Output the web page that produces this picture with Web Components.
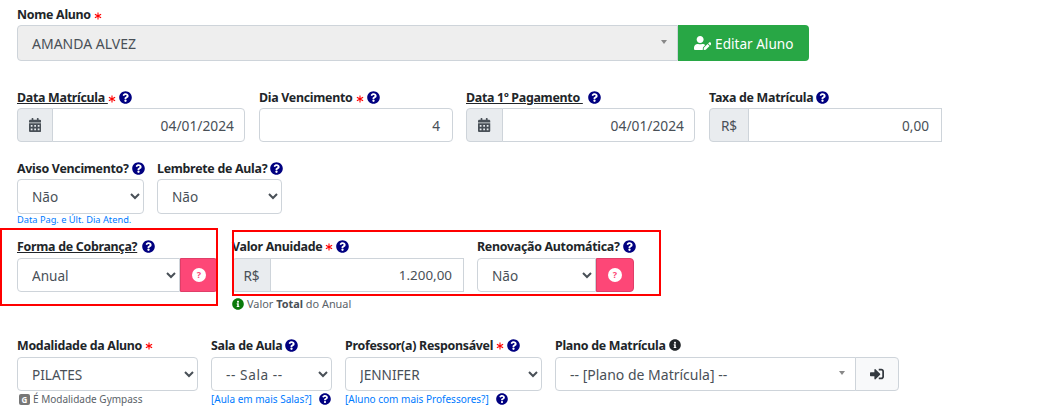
<!DOCTYPE html>
<html lang="pt-BR">
<head>
<meta charset="utf-8">
<title>Cadastro de Matrícula</title>
<style>
	body {
		margin: 0;
		background: #fff;
		font-family: "Noto Sans", "Open Sans", sans-serif;
		color: #212529;
		width: 1052px;
		height: 413px;
		overflow: hidden;
	}
</style>
</head>
<body>

<matricula-form></matricula-form>

<script>
// icon paths (solid set)
const ICONS = {
	question: ['0 0 512 512', 'M504 256c0 136.997-111.043 248-248 248S8 392.997 8 256C8 119.083 119.043 8 256 8s248 111.083 248 248zM262.655 90c-54.497 0-89.255 22.957-116.549 63.758-3.536 5.286-2.353 12.415 2.715 16.258l34.699 26.31c5.205 3.947 12.621 3.008 16.665-2.122 17.864-22.658 30.113-35.797 57.303-35.797 20.429 0 45.698 13.148 45.698 32.958 0 14.976-12.363 22.667-32.534 33.976C247.128 238.528 216 254.941 216 296v4c0 6.627 5.373 12 12 12h56c6.627 0 12-5.373 12-12v-1.333c0-28.462 83.186-29.647 83.186-106.667 0-58.002-60.165-102-116.531-102zM256 338c-25.365 0-46 20.635-46 46 0 25.364 20.635 46 46 46s46-20.636 46-46c0-25.365-20.635-46-46-46z'],
	info: ['0 0 512 512', 'M256 8C119.043 8 8 119.083 8 256c0 136.997 111.043 248 248 248s248-111.003 248-248C504 119.083 392.957 8 256 8zm0 110c23.196 0 42 18.804 42 42s-18.804 42-42 42-42-18.804-42-42 18.804-42 42-42zm56 254c0 6.627-5.373 12-12 12h-88c-6.627 0-12-5.373-12-12v-24c0-6.627 5.373-12 12-12h12v-64h-12c-6.627 0-12-5.373-12-12v-24c0-6.627 5.373-12 12-12h64c6.627 0 12 5.373 12 12v100h12c6.627 0 12 5.373 12 12v24z'],
	calendar: ['0 0 448 512', 'M0 464c0 26.5 21.5 48 48 48h352c26.5 0 48-21.5 48-48V192H0v272zm320-196c0-6.6 5.4-12 12-12h40c6.6 0 12 5.4 12 12v40c0 6.6-5.4 12-12 12h-40c-6.6 0-12-5.4-12-12v-40zm0 128c0-6.6 5.4-12 12-12h40c6.6 0 12 5.4 12 12v40c0 6.6-5.4 12-12 12h-40c-6.6 0-12-5.4-12-12v-40zM192 268c0-6.6 5.4-12 12-12h40c6.6 0 12 5.4 12 12v40c0 6.6-5.4 12-12 12h-40c-6.6 0-12-5.4-12-12v-40zm0 128c0-6.6 5.4-12 12-12h40c6.6 0 12 5.4 12 12v40c0 6.6-5.4 12-12 12h-40c-6.6 0-12-5.4-12-12v-40zM64 268c0-6.6 5.4-12 12-12h40c6.6 0 12 5.4 12 12v40c0 6.6-5.4 12-12 12H76c-6.6 0-12-5.4-12-12v-40zm0 128c0-6.6 5.4-12 12-12h40c6.6 0 12 5.4 12 12v40c0 6.6-5.4 12-12 12H76c-6.6 0-12-5.4-12-12v-40zM400 64h-48V16c0-8.8-7.2-16-16-16h-32c-8.8 0-16 7.2-16 16v48H160V16c0-8.8-7.2-16-16-16h-32c-8.8 0-16 7.2-16 16v48H48C21.5 64 0 85.5 0 112v48h448v-48c0-26.5-21.5-48-48-48z'],
	useredit: ['0 0 640 512', 'M224 256c70.7 0 128-57.3 128-128S294.7 0 224 0 96 57.3 96 128s57.3 128 128 128zm89.6 32h-16.7c-22.2 10.2-46.9 16-72.9 16s-50.6-5.8-72.9-16h-16.7C60.2 288 0 348.2 0 422.4V464c0 26.5 21.5 48 48 48h274.9c-2.4-6.8-3.4-14-2.6-21.3l6.8-60.9 1.2-11.1 7.9-7.9 77.3-77.3c-24.5-27.7-60-45.5-99.9-45.5zm45.3 145.3l-6.8 61c-1.1 10.2 7.5 18.8 17.6 17.6l60.9-6.8 137.9-137.9-71.7-71.7-137.9 137.8zM633 268.9L595.1 231c-9.3-9.3-24.5-9.3-33.8 0l-37.8 37.8-4.1 4.1 71.8 71.7 41.8-41.8c9.3-9.4 9.3-24.5 0-33.9z'],
	signin: ['0 0 512 512', 'M416 448h-84c-6.6 0-12-5.4-12-12v-40c0-6.6 5.4-12 12-12h84c17.7 0 32-14.3 32-32V160c0-17.7-14.3-32-32-32h-84c-6.6 0-12-5.4-12-12V76c0-6.6 5.4-12 12-12h84c53 0 96 43 96 96v192c0 53-43 96-96 96zm-47-201L201 79c-15-15-41-4.5-41 17v96H24c-13.3 0-24 10.7-24 24v96c0 13.3 10.7 24 24 24h136v96c0 21.5 26 32 41 17l168-168c9.3-9.4 9.3-24.6 0-34z'],
};

// A1. fa-style icon
class FaIcon extends HTMLElement {
	connectedCallback() {
		const [box, d] = ICONS[this.getAttribute('name')];
		const size = this.getAttribute('size') || 13;
		const color = this.getAttribute('color') || '#000080';
		const root = this.shadowRoot || this.attachShadow({ mode: 'open' });
		root.innerHTML = `
			<style>
				:host { display: inline-flex; align-items: center; flex: none; }
				svg { display: block; height: ${size}px; fill: ${color}; }
			</style>
			<svg viewBox="${box}" aria-hidden="true"><path d="${d}"/></svg>
		`;
	}
}
customElements.define('fa-icon', FaIcon);

// A2. Field label: required star, help icon, optional underline
class FieldLabel extends HTMLElement {
	connectedCallback() {
		const icon = this.getAttribute('icon');
		const iconColor = icon === 'info' ? '#212529' : '#000080';
		const iconSize = icon === 'info' ? 12 : 13;
		const root = this.shadowRoot || this.attachShadow({ mode: 'open' });
		root.innerHTML = `
			<style>
				:host {
					display: flex;
					align-items: center;
					box-sizing: border-box;
					height: 21px;
					padding-bottom: var(--label-pb, 0);
					font-size: 12.4px;
					font-weight: 700;
					letter-spacing: -0.28px;
					color: #212529;
					white-space: nowrap;
				}
				.under { text-decoration: underline; }
				.star { display: block; flex: none; width: 8px; height: 8px; margin-left: 3px; position: relative; top: 1px; stroke: #f00; stroke-width: 1.1; }
				.under + .star { margin-left: 0; }
				fa-icon { margin-left: 3px; }
				.under + fa-icon { margin-left: 5px; }
			</style>
			<span class="${this.hasAttribute('underline') ? 'under' : ''}"><slot></slot></span>
			${this.hasAttribute('required') ? '<svg class="star" viewBox="0 0 8 8" aria-hidden="true"><path d="M4 .4v7.2M.9 2.2l6.2 3.6M7.1 2.2L.9 5.8"/></svg>' : ''}
			${icon ? `<fa-icon name="${icon}" size="${iconSize}" color="${iconColor}"></fa-icon>` : ''}
		`;
	}
}
customElements.define('field-label', FieldLabel);

// A3. Box that looks like a form-control, value passed in the slot
class InputBox extends HTMLElement {
	constructor() {
		super();
		this.attachShadow({ mode: 'open' }).innerHTML = `
			<style>
				:host {
					display: flex;
					align-items: center;
					justify-content: flex-end;
					flex: 1;
					min-width: 0;
					height: 100%;
					box-sizing: border-box;
					padding: 0 var(--pr, 12px) 0 0;
					border: 1px solid #ced4da;
					border-radius: 4px;
					background: #fff;
					font-size: var(--fs, 13.6px);
					color: #495057;
				}
				:host([joined]) { border-radius: 0 4px 4px 0; margin-left: -1px; }
				:host([square]) { border-radius: 0; margin-left: -1px; }
			</style>
			<slot></slot>
		`;
	}
}
customElements.define('input-box', InputBox);

// A4. input-group addon (R$, calendar, etc)
class GroupAddon extends HTMLElement {
	constructor() {
		super();
		this.attachShadow({ mode: 'open' }).innerHTML = `
			<style>
				:host {
					display: flex;
					align-items: center;
					justify-content: center;
					flex: none;
					width: 36px;
					height: 100%;
					box-sizing: border-box;
					border: 1px solid #ced4da;
					border-radius: 4px 0 0 4px;
					background: #e9ecef;
					font-size: 13.6px;
					color: #495057;
				}
			</style>
			<slot></slot>
		`;
	}
}
customElements.define('group-addon', GroupAddon);

// A5. Native select with options from the attribute
class SelectBox extends HTMLElement {
	connectedCallback() {
		const root = this.shadowRoot || this.attachShadow({ mode: 'open' });
		root.innerHTML = `
			<style>
				:host { display: block; flex: 1; min-width: 0; height: 100%; }
				select {
					display: block;
					width: 100%;
					height: 100%;
					box-sizing: border-box;
					padding: 0 10px;
					border: 1px solid #ced4da;
					border-radius: 4px;
					background: #fff;
					font: 13.6px "Noto Sans", "Open Sans", sans-serif;
					letter-spacing: var(--ls, 0);
					color: #495057;
				}
				:host([joined]) select { border-radius: 4px 0 0 4px; }
			</style>
			<select><option>${this.getAttribute('value')}</option></select>
		`;
	}
}
customElements.define('select-box', SelectBox);

// A6. select2-like combo (caret at right, slot for the text)
class ComboBox extends HTMLElement {
	constructor() {
		super();
		this.attachShadow({ mode: 'open' }).innerHTML = `
			<style>
				:host {
					display: flex;
					align-items: center;
					flex: 1;
					min-width: 0;
					height: 100%;
					box-sizing: border-box;
					padding: 0 15px 0 14px;
					border: 1px solid #ced4da;
					border-radius: 4px 0 0 4px;
					background: #fff;
					font-size: 14px;
					color: #495057;
				}
				:host([disabled]) { background: #eee; }
				.txt { flex: 1; }
				.caret { width: 0; height: 0; border: 3.5px solid transparent; border-top: 4px solid #888; border-bottom: 0; margin-right: -5px; margin-top: -2px; }
			</style>
			<span class="txt"><slot></slot></span>
			<span class="caret"></span>
		`;
	}
}
customElements.define('combo-box', ComboBox);

// A7. Fixed-height row of controls
class ControlGroup extends HTMLElement {
	constructor() {
		super();
		this.attachShadow({ mode: 'open' }).innerHTML = `
			<style>
				:host { display: flex; height: var(--h, 34px); }
			</style>
			<slot></slot>
		`;
	}
}
customElements.define('control-group', ControlGroup);

// A8. Square pink help button
class PinkHelp extends HTMLElement {
	constructor() {
		super();
		this.attachShadow({ mode: 'open' }).innerHTML = `
			<style>
				:host {
					display: flex;
					align-items: center;
					justify-content: center;
					flex: none;
					width: 38px;
					height: 100%;
					box-sizing: border-box;
					background: #fd4777;
					border: 1px solid #e03e68;
					border-radius: 0 4px 4px 0;
				}
				.dot {
					width: 14px;
					height: 14px;
					border-radius: 50%;
					background: #fff;
					color: #fd4777;
					font: 700 9px/14px "Noto Sans", sans-serif;
					text-align: center;
				}
			</style>
			<span class="dot">?</span>
		`;
	}
}
customElements.define('pink-help', PinkHelp);

// A9. The whole form
class MatriculaForm extends HTMLElement {
	constructor() {
		super();
		this.attachShadow({ mode: 'open' }).innerHTML = `
			<style>
				:host {
					display: block;
					position: relative;
					box-sizing: border-box;
					height: 413px;
					padding: 4px 0 0 17px;
					font-family: "Noto Sans", "Open Sans", sans-serif;
				}
				.row { display: flex; }
				.r1 { margin-bottom: 26px; }
				.r2 { margin-bottom: 16px; }
				.r4 { margin-top: 11px; --label-pb: 3px; }
				.r5 { margin-top: 25px; --label-pb: 3px; }
				.hint { font-size: 9.25px; line-height: 12px; color: #007bff; white-space: nowrap; }
				.note { display: flex; align-items: center; gap: 3px; font-size: 10px; line-height: 14px; color: #5a6268; white-space: nowrap; }
				.note.link { color: #007bff; gap: 7px; }
				.btn-edit {
					display: flex;
					align-items: center;
					justify-content: center;
					gap: 4px;
					flex: none;
					width: 131px;
					background: #28a745;
					color: #fff;
					font-size: 13.6px;
					border-radius: 0 4px 4px 0;
				}
				.btn-side {
					display: flex;
					align-items: center;
					justify-content: center;
					flex: none;
					width: 44px;
					box-sizing: border-box;
					margin-left: -1px;
					background: #f8f9fa;
					border: 1px solid #ced4da;
					border-radius: 0 4px 4px 0;
				}
				.gym {
					display: inline-flex; align-items: center; justify-content: center;
					width: 11px; height: 11px; border-radius: 2px; margin-left: 2px;
					background: #777; color: #fff; font: 700 8px/11px "Noto Sans", sans-serif;
				}
				b { font-weight: 700; color: #495057; }
				.mark { position: absolute; box-sizing: border-box; border: 2px solid #f00; pointer-events: none; }
			</style>

			<div class="row r1">
				<div style="width:792px">
					<field-label required>Nome Aluno</field-label>
					<control-group style="--h:36px">
						<combo-box disabled>AMANDA ALVEZ</combo-box>
						<div class="btn-edit"><fa-icon name="useredit" size="14" color="#fff"></fa-icon>Editar Aluno</div>
					</control-group>
				</div>
			</div>

			<div class="row r2">
				<div style="width:228px;margin-right:14px">
					<field-label underline required icon="question">Data Matrícula&nbsp;</field-label>
					<control-group>
						<group-addon><fa-icon name="calendar" size="14" color="#495057"></fa-icon></group-addon>
						<input-box joined style="--fs:13.8px;--pr:10px">04/01/2024</input-box>
					</control-group>
				</div>
				<div style="width:194px;margin-right:13px">
					<field-label required icon="question">Dia Vencimento</field-label>
					<control-group><input-box>4</input-box></control-group>
				</div>
				<div style="width:229px;margin-right:14px">
					<field-label underline icon="question">Data 1º Pagamento&nbsp;</field-label>
					<control-group>
						<group-addon style="width:37px"><fa-icon name="calendar" size="14" color="#495057"></fa-icon></group-addon>
						<input-box joined style="--fs:13.8px;--pr:10px">04/01/2024</input-box>
					</control-group>
				</div>
				<div style="width:233px">
					<field-label icon="question">Taxa de Matrícula</field-label>
					<control-group>
						<group-addon style="width:40px">R$</group-addon>
						<input-box square>0,00</input-box>
					</control-group>
				</div>
			</div>

			<div class="row r3">
				<div style="width:127px;margin-right:13px">
					<field-label icon="question">Aviso Vencimento?</field-label>
					<control-group style="--h:35px"><select-box value="Não"></select-box></control-group>
					<div class="hint">Data Pag. e Últ. Dia Atend.</div>
				</div>
				<div style="width:125px">
					<field-label icon="question">Lembrete de Aula?</field-label>
					<control-group style="--h:35px"><select-box value="Não"></select-box></control-group>
				</div>
			</div>

			<div class="row r4">
				<div style="width:201px;margin-right:14px">
					<field-label underline icon="question">Forma de Cobrança?</field-label>
					<control-group>
						<select-box joined value="Anual"></select-box>
						<pink-help></pink-help>
					</control-group>
				</div>
				<div style="width:232px;margin-right:13px">
					<field-label required icon="question">Valor Anuidade</field-label>
					<control-group>
						<group-addon style="width:39px">R$</group-addon>
						<input-box square style="--fs:13.4px;--pr:11px">1.200,00</input-box>
					</control-group>
					<div class="note" style="margin-top:5px;font-size:10.9px"><fa-icon name="info" size="12" color="#0b7a0b"></fa-icon><span>Valor <b>Total</b> do Anual</span></div>
				</div>
				<div style="width:157px">
					<field-label icon="question">Renovação Automática?</field-label>
					<control-group>
						<select-box joined value="Não"></select-box>
						<pink-help></pink-help>
					</control-group>
				</div>
			</div>

			<div class="row r5">
				<div style="width:181px;margin-right:13px">
					<field-label required>Modalidade da Aluno</field-label>
					<control-group><select-box value="PILATES"></select-box></control-group>
					<div class="note" style="margin-top:1px"><span class="gym">G</span><span>É Modalidade Gympass</span></div>
				</div>
				<div style="width:121px;margin-right:13px">
					<field-label icon="question">Sala de Aula</field-label>
					<control-group><select-box value="-- Sala --" style="--ls:.6px"></select-box></control-group>
					<div class="note link" style="margin-top:1px"><span>[Aula em mais Salas?]</span><fa-icon name="question" size="12"></fa-icon></div>
				</div>
				<div style="width:197px;margin-right:13px">
					<field-label required icon="question">Professor(a) Responsável</field-label>
					<control-group><select-box value="JENNIFER"></select-box></control-group>
					<div class="note link" style="margin-top:1px"><span>[Aluno com mais Professores?]</span><fa-icon name="question" size="12"></fa-icon></div>
				</div>
				<div style="width:344px">
					<field-label icon="info">Plano de Matrícula</field-label>
					<control-group>
						<combo-box>-- [Plano de Matrícula] --</combo-box>
						<div class="btn-side"><fa-icon name="signin" size="14" color="#343a40"></fa-icon></div>
					</control-group>
				</div>
			</div>

			<div class="mark" style="left:0;top:228px;width:218px;height:78px"></div>
			<div class="mark" style="left:232px;top:230px;width:429px;height:66px"></div>
		`;
	}
}
customElements.define('matricula-form', MatriculaForm);
</script>
</body>
</html>
